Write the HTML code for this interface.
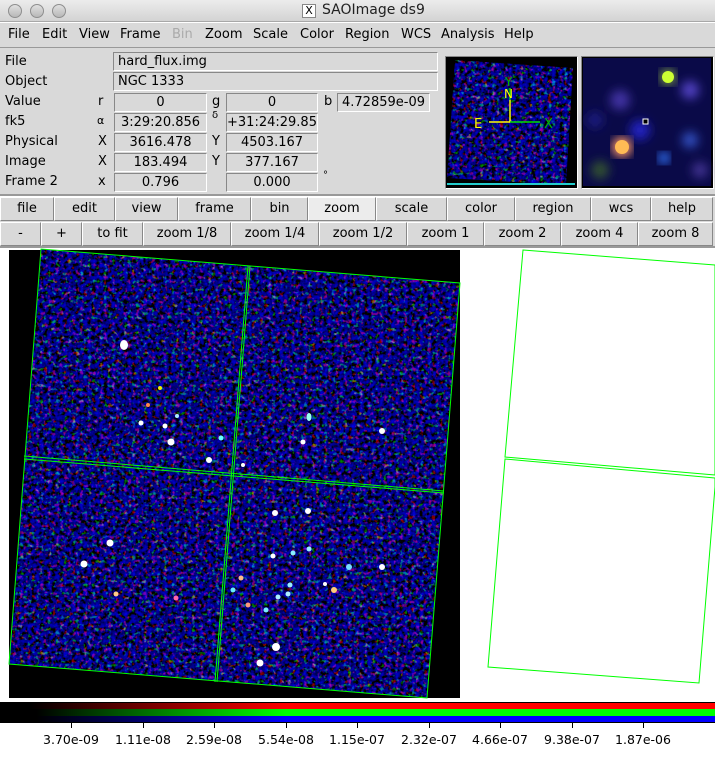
<!DOCTYPE html>
<html><head><meta charset="utf-8"><style>
*{margin:0;padding:0;box-sizing:border-box}
body{width:715px;height:762px;overflow:hidden;background:#fff;font-family:"DejaVu Sans","Liberation Sans",sans-serif;font-size:13px;color:#000;position:relative}
.a{position:absolute}
#title{left:0;top:0;width:715px;height:22px;background:linear-gradient(#ececec,#d3d3d3);border-bottom:1px solid #a8a8a8}
.tl{width:14px;height:14px;border-radius:50%;top:4px;background:linear-gradient(#e0e0e0,#b8b8b8);border:1px solid #8e8e8e}
#menu{left:0;top:23px;width:715px;height:25px;background:#d9d9d9;border-bottom:1px solid #999}
#menu span{position:absolute;top:4px}
#panel{left:0;top:48px;width:715px;height:148px;background:#d9d9d9;border-bottom:2px solid #999}
.lb{position:absolute;font-size:13px}
.bx{position:absolute;height:19px;border:1px solid #888;border-right-color:#fff;border-bottom-color:#fff;background:#d9d9d9;text-align:center;font-size:13px;line-height:17px}
.row{left:0;width:715px;height:25px;background:#d9d9d9}
.b{position:absolute;top:0;height:24px;border:1px solid #fff;border-right-color:#888;border-bottom-color:#888;text-align:center;line-height:22px;font-size:13px}
</style></head><body>
<div id="title" class="a">
<div class="a tl" style="left:8px"></div><div class="a tl" style="left:30px"></div><div class="a tl" style="left:52px"></div>
<div class="a" style="left:302px;top:4px;width:14px;height:14px;border:1px solid #888;background:#fff;font-size:11px;line-height:12px;text-align:center">X</div>
<div class="a" style="left:322px;top:2px;font-size:14px;color:#222">SAOImage ds9</div>
</div>
<div id="menu" class="a">
<span style="left:8px">File</span><span style="left:42px">Edit</span><span style="left:79px">View</span><span style="left:120px">Frame</span><span style="left:172px;color:#aaa">Bin</span><span style="left:205px">Zoom</span><span style="left:253px">Scale</span><span style="left:300px">Color</span><span style="left:345px">Region</span><span style="left:401px">WCS</span><span style="left:441px">Analysis</span><span style="left:504px">Help</span>
</div>
<div id="panel" class="a">
<div class="lb" style="left:5px;top:6px">File</div>
<div class="lb" style="left:5px;top:26px">Object</div>
<div class="lb" style="left:5px;top:46px">Value</div>
<div class="lb" style="left:5px;top:66px">fk5</div>
<div class="lb" style="left:5px;top:86px">Physical</div>
<div class="lb" style="left:5px;top:106px">Image</div>
<div class="lb" style="left:5px;top:126px">Frame 2</div>
<div class="bx" style="left:113px;top:4px;width:325px;text-align:left;padding-left:4px">hard_flux.img</div>
<div class="bx" style="left:113px;top:24px;width:325px;text-align:left;padding-left:4px">NGC 1333</div>
<div class="lb" style="left:98px;top:46px">r</div><div class="lb" style="left:97px;top:66px;font-size:11px">α</div><div class="lb" style="left:98px;top:86px">X</div><div class="lb" style="left:98px;top:106px">X</div><div class="lb" style="left:98px;top:126px">x</div>
<div class="bx" style="left:114px;top:45px;width:93px">0</div>
<div class="bx" style="left:114px;top:65px;width:93px">3:29:20.856</div>
<div class="bx" style="left:114px;top:85px;width:93px">3616.478</div>
<div class="bx" style="left:114px;top:105px;width:93px">183.494</div>
<div class="bx" style="left:114px;top:125px;width:93px">0.796</div>
<div class="lb" style="left:212px;top:46px">g</div><div class="lb" style="left:212px;top:62px;font-size:10px">δ</div><div class="lb" style="left:212px;top:86px">Y</div><div class="lb" style="left:212px;top:106px">Y</div>
<div class="bx" style="left:226px;top:45px;width:92px">0</div>
<div class="bx" style="left:226px;top:65px;width:92px">+31:24:29.85</div>
<div class="bx" style="left:226px;top:85px;width:92px">4503.167</div>
<div class="bx" style="left:226px;top:105px;width:92px">377.167</div>
<div class="bx" style="left:226px;top:125px;width:92px">0.000</div>
<div class="lb" style="left:324px;top:46px">b</div><div class="lb" style="left:323px;top:122px;font-size:10px">°</div>
<div class="bx" style="left:337px;top:45px;width:93px">4.72859e-09</div>
<div class="a" style="left:445px;top:8px;width:133px;height:133px;border:1px solid #fff;border-top-color:#888;border-left-color:#888;background:#000"></div>
<div class="a" style="left:581px;top:8px;width:133px;height:133px;border:1px solid #fff;border-top-color:#888;border-left-color:#888;background:#000"></div>
</div>
<svg class="a" style="left:0;top:0" width="715" height="762">
<defs>
<filter id="n" x="0" y="0" width="100%" height="100%"><feTurbulence type="fractalNoise" baseFrequency="0.25" numOctaves="2" seed="3"/><feColorMatrix values="1.2 0 0 0 -0.72  0 1.1 0 0 -0.68  0 0 1.4 0 -0.5  0 0 0 0 1"/></filter>
<filter id="bl"><feGaussianBlur stdDeviation="5"/></filter>
<clipPath id="cp"><polygon points="41,249 460,283 427,698 9,664"/></clipPath>
<clipPath id="cp2"><polygon points="455,60 573,68 566,185 447,178"/></clipPath>
<linearGradient id="gr" x1="0" x2="1"><stop offset="0.04" stop-color="#000"/><stop offset="0.4" stop-color="#f00"/></linearGradient>
<linearGradient id="gg" x1="0" x2="1"><stop offset="0.05" stop-color="#000"/><stop offset="0.4" stop-color="#0f0"/></linearGradient>
<linearGradient id="gb" x1="0" x2="1"><stop offset="0.05" stop-color="#000"/><stop offset="0.4" stop-color="#00f"/></linearGradient>
</defs>
<rect x="9" y="250" width="451" height="448" fill="#000"/>
<g clip-path="url(#cp)"><rect x="9" y="249" width="452" height="450" filter="url(#n)"/></g>
<g fill="#fff">
<ellipse cx="124" cy="345" rx="4" ry="5"/><circle cx="160" cy="388" r="2" fill="#ee0"/><circle cx="148" cy="405" r="2" fill="#f84"/><circle cx="177" cy="416" r="2" fill="#aef"/><circle cx="141" cy="423" r="2.5"/><circle cx="165" cy="426" r="2.5"/><circle cx="171" cy="442" r="3.5"/><circle cx="221" cy="438" r="2.5" fill="#6ff"/><circle cx="209" cy="460" r="3"/><circle cx="243" cy="465" r="2"/><ellipse cx="309" cy="417" rx="2.5" ry="4" fill="#9fe"/><circle cx="382" cy="431" r="3"/><circle cx="303" cy="442" r="2.5"/><circle cx="275" cy="513" r="3"/><circle cx="308" cy="511" r="3"/><circle cx="110" cy="543" r="3.5"/><circle cx="84" cy="564" r="3.5"/><circle cx="116" cy="594" r="2.5" fill="#fc8"/><circle cx="176" cy="598" r="2.5" fill="#f6a"/><circle cx="273" cy="556" r="2.5"/><circle cx="293" cy="553" r="2.5" fill="#8ef"/><circle cx="309" cy="549" r="2.5" fill="#9ef"/><circle cx="349" cy="567" r="3" fill="#7df"/><circle cx="382" cy="567" r="3"/><circle cx="241" cy="578" r="2.5" fill="#fb8"/><circle cx="233" cy="590" r="2.5" fill="#6ef"/><circle cx="290" cy="585" r="2.5" fill="#9ef"/><circle cx="325" cy="584" r="2"/><circle cx="334" cy="590" r="3" fill="#fc7"/><circle cx="278" cy="597" r="2.5" fill="#aef"/><circle cx="288" cy="594" r="2.5" fill="#aef"/><circle cx="248" cy="605" r="2.5" fill="#f97"/><circle cx="266" cy="610" r="2.5" fill="#7ef"/><circle cx="276" cy="647" r="4"/><circle cx="260" cy="663" r="3.5"/>
</g>
<g fill="none" stroke="#0f0" stroke-width="1">
<polygon points="41,249 460,283 427,698 9,664"/>
<line x1="250" y1="266" x2="217" y2="682"/><line x1="248" y1="266" x2="215" y2="682"/>
<line x1="24" y1="456" x2="444" y2="491"/><line x1="24" y1="459" x2="444" y2="493"/>
<polygon points="523,250 715,265 715,475 505,457"/>
<polygon points="505,459 715,478 715,487 699,683 488,667"/>
</g>
<!-- panner -->
<g clip-path="url(#cp2)"><rect x="447" y="58" width="128" height="128" filter="url(#n)"/></g>
<rect x="447" y="183" width="128" height="2" fill="#2cc"/>
<line x1="510" y1="122" x2="489" y2="122" stroke="#ff0" stroke-width="1.5"/><line x1="510" y1="122" x2="510" y2="100" stroke="#ff0" stroke-width="1.5"/>
<line x1="510" y1="122" x2="540" y2="122" stroke="#0d0" stroke-width="1.5"/><line x1="510" y1="100" x2="510" y2="88" stroke="#0d0" stroke-width="1.5"/>
<text x="474" y="128" fill="#ff0" font-size="13" font-family="DejaVu Sans">E</text><text x="504" y="98" fill="#ff0" font-size="12" font-family="DejaVu Sans">N</text><text x="505" y="86" fill="#0b0" font-size="12" font-family="DejaVu Sans">Y</text><text x="544" y="128" fill="#0b0" font-size="13" font-family="DejaVu Sans">X</text>
<!-- magnifier -->
<rect x="583" y="58" width="128" height="128" fill="#0a0a48"/>
<g filter="url(#bl)"><circle cx="620" cy="100" r="10" fill="#4030a0"/><circle cx="690" cy="90" r="9" fill="#5040c0"/><circle cx="600" cy="170" r="9" fill="#305030"/><circle cx="640" cy="130" r="10" fill="#2020c0"/><circle cx="690" cy="140" r="8" fill="#3050c0"/><circle cx="700" cy="170" r="8" fill="#403090"/><circle cx="595" cy="120" r="8" fill="#1a1a80"/></g>
<circle cx="668" cy="77" r="8" fill="#cf4" filter="url(#bl)" opacity="0.6"/><circle cx="668" cy="77" r="6" fill="#cf3"/>
<circle cx="622" cy="147" r="10" fill="#f96" filter="url(#bl)"/><circle cx="622" cy="147" r="7" fill="#fb5"/>
<circle cx="664" cy="158" r="6" fill="#37f" filter="url(#bl)"/>
<rect x="643" y="119" width="5" height="5" fill="#000" stroke="#fff" stroke-width="1"/>
<!-- colorbar -->
<rect x="0" y="702" width="715" height="21" fill="#000"/>
<rect x="1" y="703" width="714" height="6" fill="url(#gr)"/><rect x="1" y="709" width="714" height="7" fill="url(#gg)"/><rect x="1" y="716" width="714" height="6" fill="url(#gb)"/>
<g stroke="#000"><line x1="71.5" y1="723" x2="71.5" y2="728"/><line x1="143.5" y1="723" x2="143.5" y2="728"/><line x1="214.5" y1="723" x2="214.5" y2="728"/><line x1="286.5" y1="723" x2="286.5" y2="728"/><line x1="357.5" y1="723" x2="357.5" y2="728"/><line x1="429.5" y1="723" x2="429.5" y2="728"/><line x1="500.5" y1="723" x2="500.5" y2="728"/><line x1="572.5" y1="723" x2="572.5" y2="728"/><line x1="643.5" y1="723" x2="643.5" y2="728"/></g>
<g font-size="12.5" font-family="DejaVu Sans" text-anchor="middle" fill="#000"><text x="71" y="744">3.70e-09</text><text x="143" y="744">1.11e-08</text><text x="214" y="744">2.59e-08</text><text x="286" y="744">5.54e-08</text><text x="357" y="744">1.15e-07</text><text x="429" y="744">2.32e-07</text><text x="500" y="744">4.66e-07</text><text x="572" y="744">9.38e-07</text><text x="643" y="744">1.87e-06</text></g>
</svg>
<div class="a row" style="top:197px">
<div class="b" style="left:0;width:54px">file</div><div class="b" style="left:54px;width:61px">edit</div><div class="b" style="left:115px;width:63px">view</div><div class="b" style="left:178px;width:73px">frame</div><div class="b" style="left:251px;width:57px">bin</div><div class="b" style="left:308px;width:68px;background:#ececec">zoom</div><div class="b" style="left:376px;width:71px">scale</div><div class="b" style="left:447px;width:68px">color</div><div class="b" style="left:515px;width:76px">region</div><div class="b" style="left:591px;width:60px">wcs</div><div class="b" style="left:651px;width:62px">help</div>
</div>
<div class="a row" style="top:222px;border-bottom:2px solid #999;height:26px">
<div class="b" style="left:0;width:41px">-</div><div class="b" style="left:41px;width:41px">+</div><div class="b" style="left:82px;width:61px">to fit</div><div class="b" style="left:143px;width:88px">zoom 1/8</div><div class="b" style="left:231px;width:88px">zoom 1/4</div><div class="b" style="left:319px;width:88px">zoom 1/2</div><div class="b" style="left:407px;width:77px">zoom 1</div><div class="b" style="left:484px;width:77px">zoom 2</div><div class="b" style="left:561px;width:77px">zoom 4</div><div class="b" style="left:638px;width:75px">zoom 8</div>
</div>
</body></html>
